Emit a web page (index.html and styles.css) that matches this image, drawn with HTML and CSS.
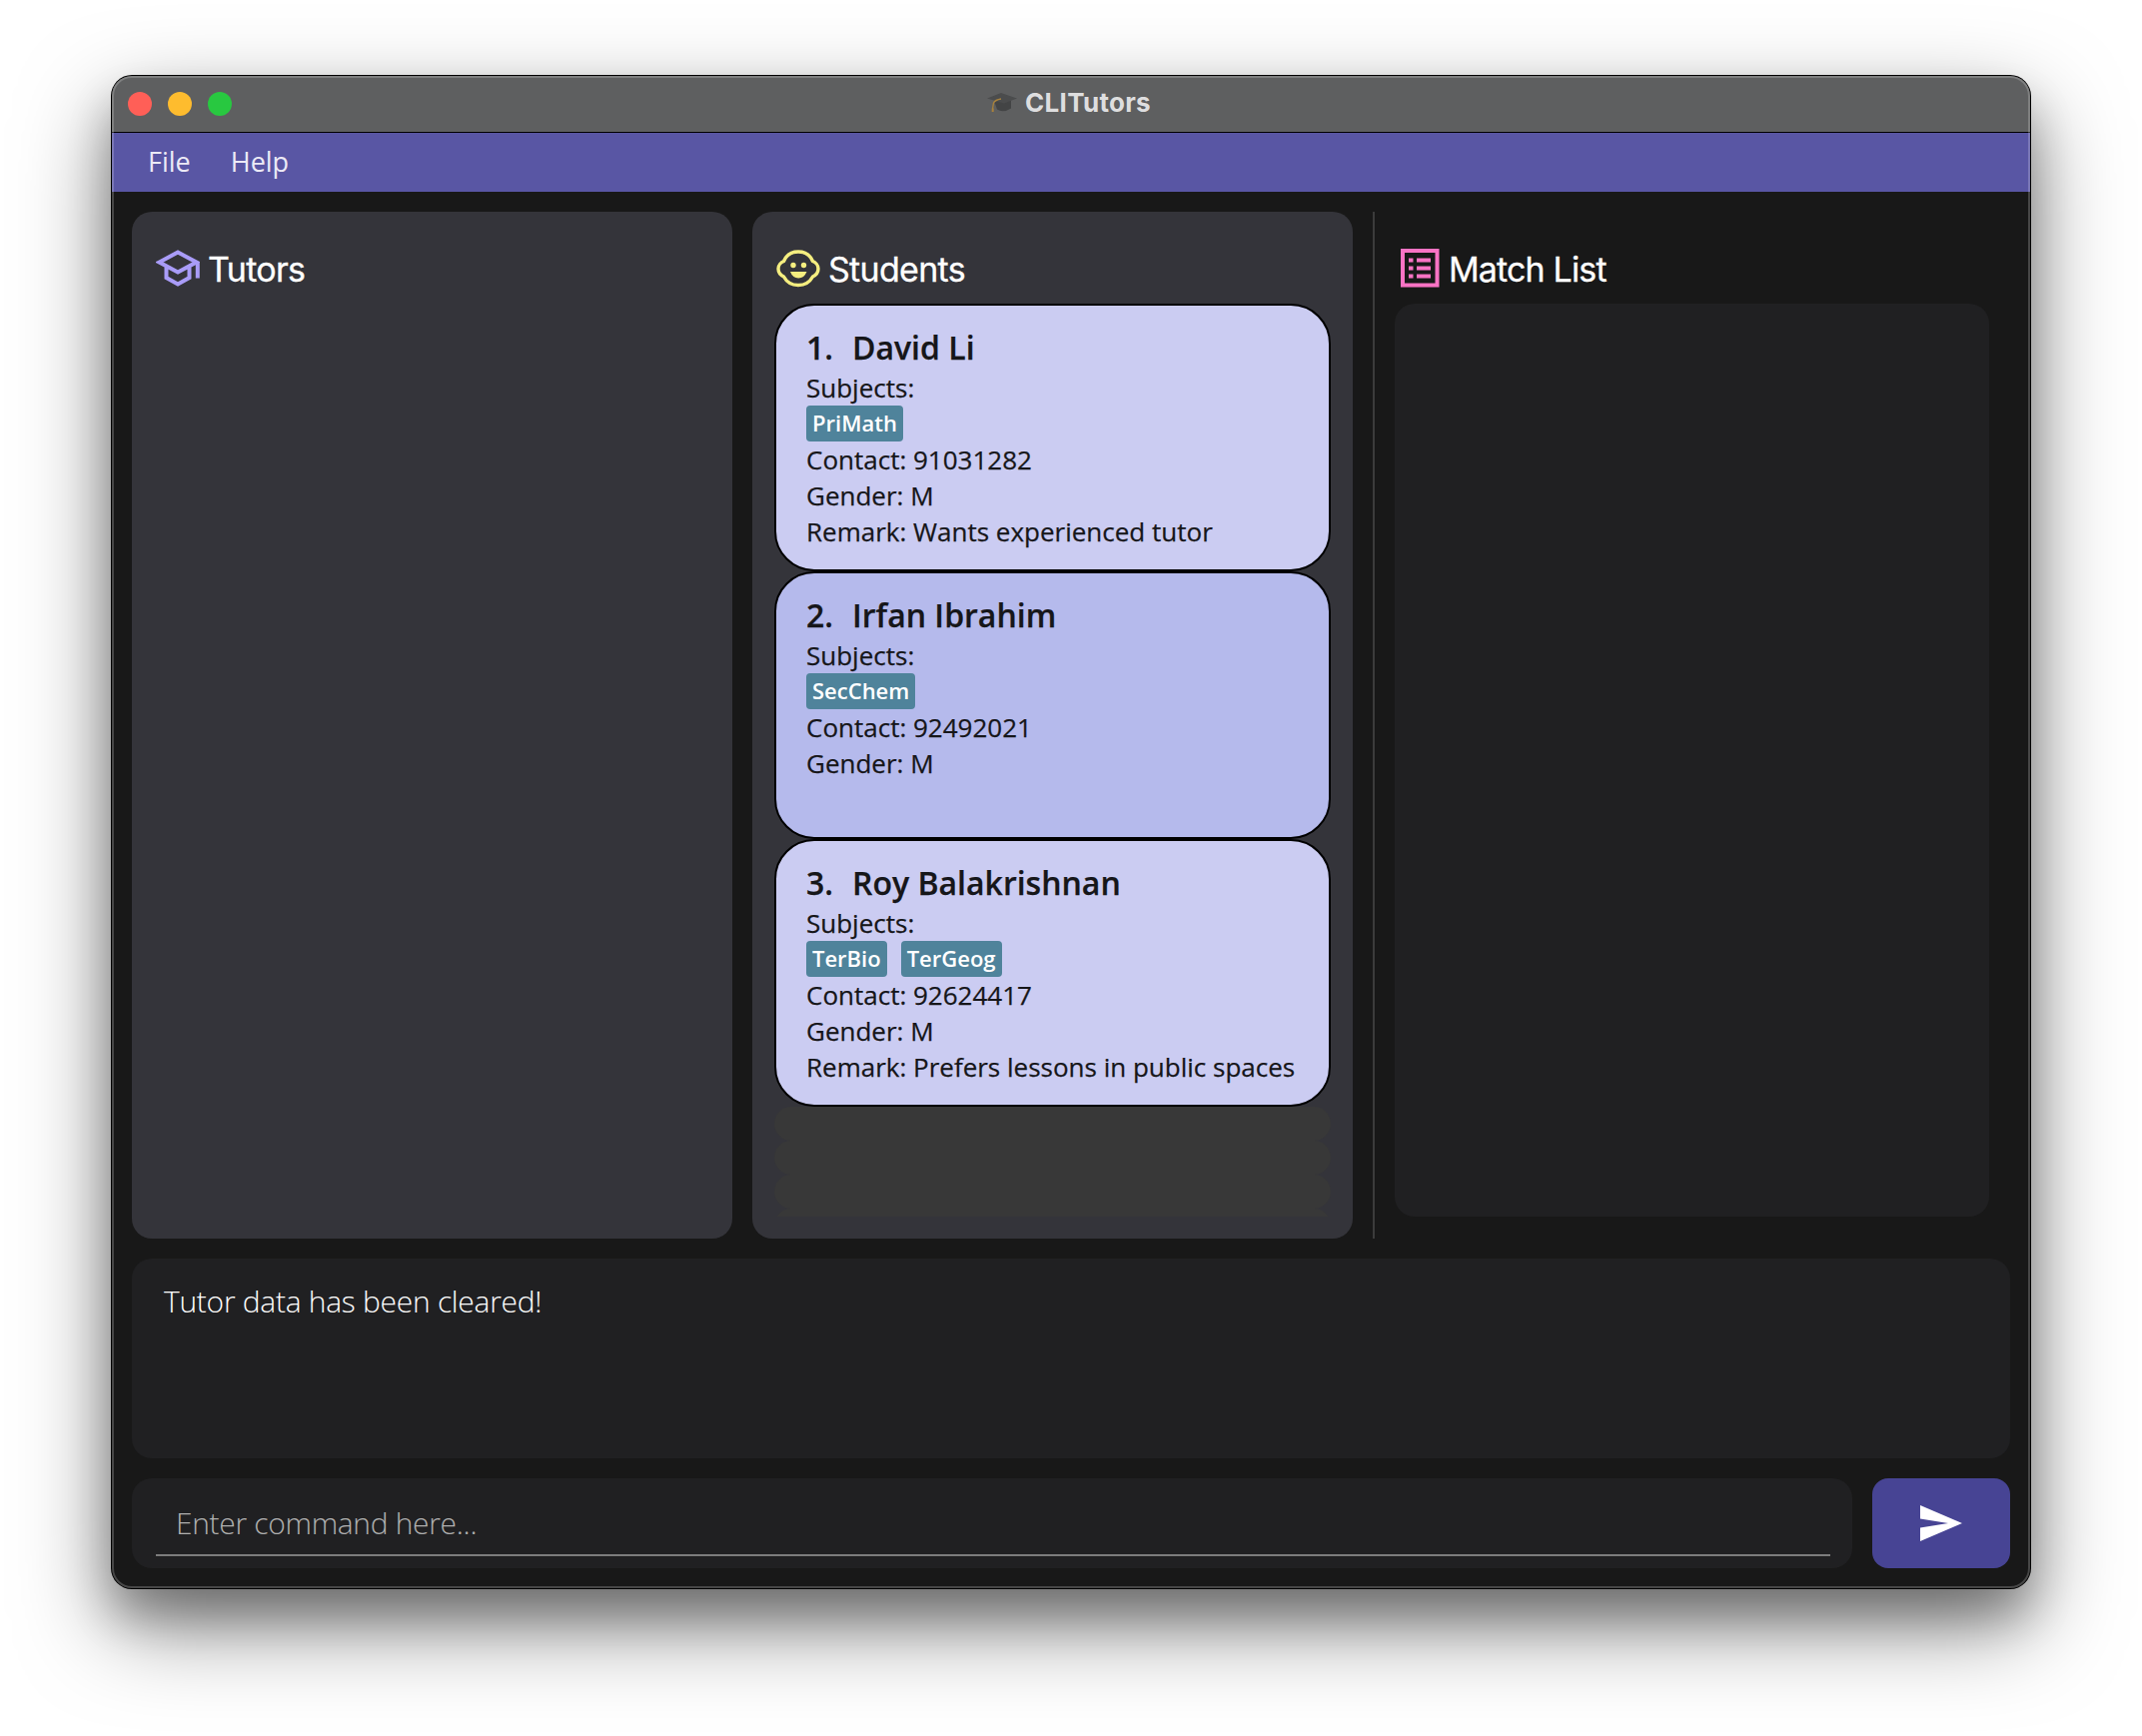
FILE: index.html
```html
<!DOCTYPE html>
<html lang="en">
<head>
<meta charset="utf-8">
<title>CLITutors</title>
<link rel="stylesheet" href="styles.css">
</head>
<body>
<main class="window">
  <header class="titlebar">
    <div class="lights"><span class="light close"></span><span class="light minimize"></span><span class="light zoom"></span></div>
    <div class="title">
      <svg class="cap" viewBox="0 0 30 22">
        <path d="M7 9 L24 9 L24 16.500 Q16 21.500 10 17.500 Z" fill="#434445"/>
        <path d="M0 6.500 L14 1 L30 6.500 L17 11.500 Z" fill="#4b4c4d"/>
        <path d="M14 7 Q8 8 6.500 11 L5.500 17" fill="none" stroke="#a8823c" stroke-width="1.300"/>
        <path d="M4.700 16.500 h2 v3.500 h-2z" fill="#a8823c"/>
      </svg>
      <h1>CLITutors</h1>
    </div>
  </header>
  <nav class="menubar"><span>File</span><span>Help</span></nav>
  <div class="content">
    <div class="columns">
      <section class="panel">
        <div class="heading">
          <svg class="icon" viewBox="0 0 44 40" fill="none" stroke="#a99cf8" stroke-width="4">
            <path d="M3.500 13.500 L22 3.500 L40.500 13.500 L22 23.500 Z M10.500 17.500 V29 L22 35.500 L33.500 29 V17.500 M41.800 13 V29.500"/>
          </svg>
          <h2>Tutors</h2>
        </div>
      </section>
      <section class="panel">
        <div class="heading">
          <svg class="icon" viewBox="0 0 44 40">
            <path d="M22 3 C29 3 34 6.500 36.500 12.500 C39 13.500 42 16.500 42 20 C42 23.500 39.500 26.500 36.500 28 C33.500 33.500 29 36.500 22 36.500 C15 36.500 10.500 33.500 7.500 28 C4.500 26.500 2 23.500 2 20 C2 16.500 5 13.500 7.500 12.500 C10 6.500 15 3 22 3 Z" fill="none" stroke="#f5ee80" stroke-width="3.400"/>
            <circle cx="17" cy="16.500" r="2.700" fill="#f5ee80"/><circle cx="27.500" cy="16.500" r="2.700" fill="#f5ee80"/>
            <path d="M14 23 H30.500 Q28 29.500 22.200 29.500 Q16.500 29.500 14 23 Z" fill="#f5ee80"/>
          </svg>
          <h2>Students</h2>
        </div>
        <div class="list">
          <article class="card">
            <h3><span class="num">1.</span>David Li</h3>
            <p>Subjects:</p>
            <div class="tags"><span class="tag">PriMath</span></div>
            <p>Contact: 91031282</p>
            <p>Gender: M</p>
            <p>Remark: Wants experienced tutor</p>
          </article>
          <article class="card even">
            <h3><span class="num">2.</span>Irfan Ibrahim</h3>
            <p>Subjects:</p>
            <div class="tags"><span class="tag">SecChem</span></div>
            <p>Contact: 92492021</p>
            <p>Gender: M</p>
          </article>
          <article class="card">
            <h3><span class="num">3.</span>Roy Balakrishnan</h3>
            <p>Subjects:</p>
            <div class="tags"><span class="tag">TerBio</span><span class="tag">TerGeog</span></div>
            <p>Contact: 92624417</p>
            <p>Gender: M</p>
            <p>Remark: Prefers lessons in public spaces</p>
          </article>
          <div class="empty"></div><div class="empty"></div><div class="empty"></div><div class="empty"></div>
        </div>
      </section>
      <section class="matches">
        <div class="heading">
          <svg class="icon" viewBox="0 0 44 40">
            <rect x="4" y="2" width="34.500" height="34.500" fill="none" stroke="#f973c4" stroke-width="4"/>
            <path d="M10 11.500 h4.500 M10 19.500 h4.500 M10 27.500 h4.500 M18 11.500 h14 M18 19.500 h14 M18 27.500 h14" fill="none" stroke="#f973c4" stroke-width="4"/>
          </svg>
          <h2>Match List</h2>
        </div>
        <div class="match-list"></div>
      </section>
    </div>
    <div class="result">Tutor data has been cleared!</div>
    <div class="command">
      <div class="field"><div class="input">Enter command here...</div></div>
      <div class="send"><svg viewBox="0 0 42 36"><path d="M0 0 L42 18 L0 36 V22.500 L28 18 L0 13.500 Z" fill="#fff"/></svg></div>
    </div>
  </div>
</main>
</body>
</html>
```
FILE: styles.css
```css
* { box-sizing: border-box; margin: 0; }
body {
  width: 2144px;
  height: 1738px;
  padding: 76px 112px 0;
  overflow: hidden;
  background: #fff;
  font-family: "Open Sans", sans-serif;
  color: #161619;
}
.window {
  position: relative;
  width: 1920px;
  height: 1514px;
  display: flex;
  flex-direction: column;
  border-radius: 20px;
  background: #181818;
  box-shadow: 0 0 0 1px #000, 0 36px 90px rgba(0, 0, 0, .5), 0 28px 44px rgba(0, 0, 0, .24);
}
/* light rim drawn over the window content */
.window::after {
  content: "";
  position: absolute;
  inset: 0;
  border-radius: 20px;
  border: 2px solid rgba(255, 255, 255, .2);
  pointer-events: none;
}
.titlebar {
  height: 57px;
  flex: none;
  display: grid;
  grid-template-columns: 1fr auto 1fr;
  align-items: center;
  padding: 0 16px;
  background: #5e5f60;
  border-bottom: 1px solid #000;
  border-radius: 20px 20px 0 0;
}
.lights { display: flex; gap: 16px; }
.light { width: 24px; height: 24px; border-radius: 50%; }
.close { background: #ff5f57; }
.minimize { background: #febc2e; }
.zoom { background: #28c840; }
.title { display: flex; align-items: center; gap: 8px; padding: 0 4px 2px 0; }
.cap { width: 30px; height: 22px; }
h1 {
  font: 700 26px/32px Inter, sans-serif;
  letter-spacing: .3px;
  color: #dededf;
}
.menubar {
  height: 59px;
  flex: none;
  display: flex;
  gap: 40px;
  padding-left: 36px;
  background: #5956a4;
  color: #eceaf6;
  font-size: 27px;
  line-height: 58px;
}
.content {
  flex: 1;
  display: flex;
  flex-direction: column;
  gap: 20px;
  padding: 20px;
}
.columns { height: 1028px; display: flex; gap: 20px; }
.panel {
  width: 601px;
  padding: 37px 22px 22px;
  border-radius: 20px;
  background: #34343a;
}
.matches {
  flex: 1;
  padding: 37px 21px 22px 20px;
  border-left: 2px solid #3b3b3b;
}
.heading { height: 55px; display: flex; gap: 8px; }
.icon { width: 44px; height: 40px; flex: none; margin: 0 0 0 2px; }
.matches .heading { gap: 6px; }
.matches .icon { margin-left: 4px; }
h2 {
  font: 400 34px/42px Inter, sans-serif;
  letter-spacing: -.7px;
  white-space: nowrap;
  color: #fff;
  -webkit-text-stroke: .3px #fff;
}
.matches h2 { letter-spacing: -.85px; }
.list { height: 914px; overflow: hidden; }
.card {
  height: 268px;
  padding: 22px 29px 0 30px;
  border: 2px solid #000;
  border-radius: 40px;
  background: #cbccf2;
  font-size: 26px;
  line-height: 36px;
  white-space: nowrap;
  -webkit-text-stroke: .25px #161619;
}
.even { background: #b5baec; }
h3 { font-size: 32px; line-height: 40px; height: 42px; font-weight: 600; display: flex; }
.num { width: 46px; }
.tags { height: 36px; display: flex; gap: 14px; -webkit-text-stroke: 0; }
.tag {
  height: 36px;
  padding: 0 6px;
  border-radius: 4px;
  background: #4f839b;
  color: #fff;
  font-size: 22px;
  line-height: 35px;
  font-weight: 600;
}
.empty { height: 34px; border-radius: 17px; background: #383838; }
.match-list { height: 914px; border-radius: 20px; background: #202022; }
.result {
  height: 200px;
  padding: 22px 32px;
  border-radius: 20px;
  background: #202022;
  color: #fff;
  font-size: 30px;
  line-height: 42px;
  font-weight: 300;
  letter-spacing: -.29px;
}
.command { height: 90px; display: flex; gap: 20px; }
.field { flex: 1; padding: 12px 22px 12px 24px; border-radius: 20px; background: #202022; }
.input {
  height: 66px;
  padding-left: 20px;
  border-bottom: 2px solid #7c7c7d;
  color: #b0b0b0;
  font-size: 30px;
  line-height: 66px;
  font-weight: 300;
  letter-spacing: -.33px;
}
.send {
  width: 138px;
  display: flex;
  align-items: center;
  justify-content: center;
  border-radius: 16px;
  background: #474494;
}
.send svg { width: 42px; height: 36px; }
```
